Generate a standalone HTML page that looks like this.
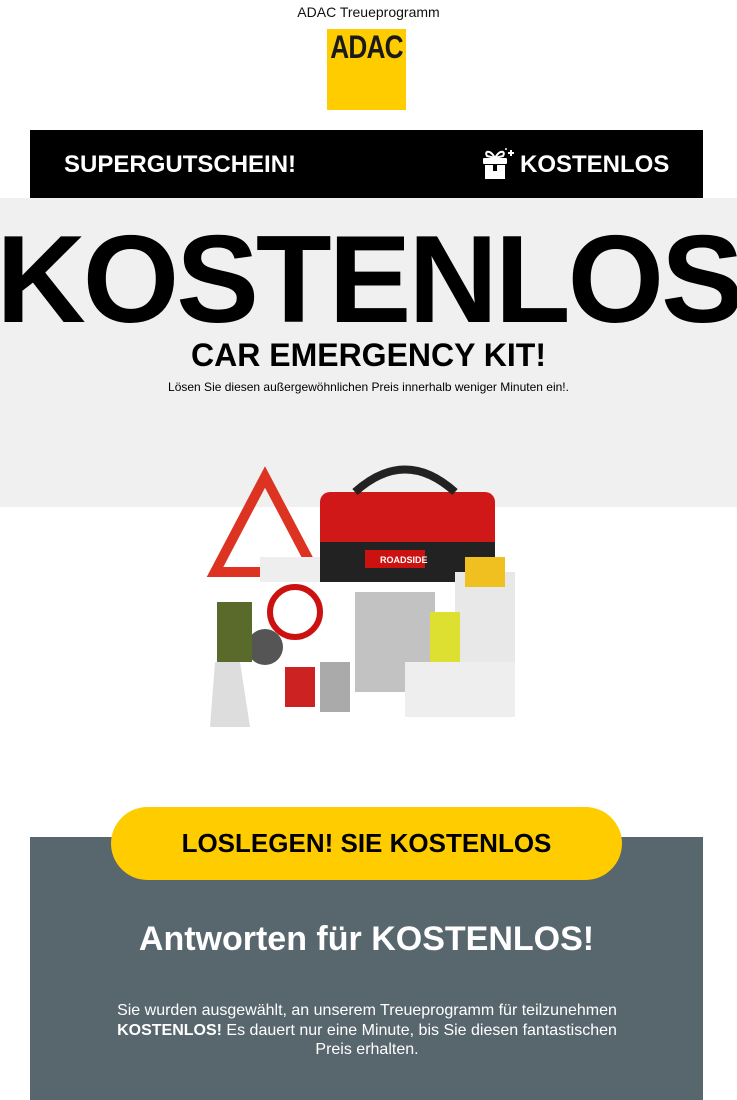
<!DOCTYPE html>
<html><head><meta charset="utf-8"><style>
*{margin:0;padding:0;box-sizing:border-box}
body{width:737px;height:1100px;overflow:hidden;background:#fff;font-family:"Liberation Sans",Arial,sans-serif;position:relative}
.abs{position:absolute}
</style></head><body>
<div class="abs" style="top:4px;left:0;width:737px;text-align:center;font-size:14px;color:#111">ADAC Treueprogramm</div>
<div class="abs" style="left:327px;top:29px;width:79px;height:81px;background:#ffcc00;overflow:hidden">
  <div style="text-align:center;font-weight:bold;font-size:32px;letter-spacing:-1px;color:#1a1a1a;margin-top:0px;transform:scaleX(0.82);margin-left:-10px;width:99px">ADAC</div>
</div>
<div class="abs" style="left:30px;top:130px;width:673px;height:68px;background:#000"></div>
<div class="abs" style="left:64px;top:151px;color:#fff;font-weight:bold;font-size:24px">SUPERGUTSCHEIN!</div>
<svg class="abs" style="left:480px;top:146px" width="36" height="34" viewBox="0 0 36 34">
<g fill="#fff"><rect x="3" y="12" width="24" height="6" rx="1"/><rect x="5" y="19" width="20" height="14"/>
<path d="M15 12 C10 3 4 5 7 10 Z M15 12 C20 3 26 5 23 10 Z" stroke="#fff" stroke-width="2" fill="none"/>
<rect x="30" y="4" width="2" height="6"/><rect x="28" y="6" width="6" height="2"/><circle cx="26" cy="3" r="1"/></g>
<rect x="13" y="19" width="4" height="6" fill="#000"/></svg>
<div class="abs" style="left:520px;top:151px;color:#fff;font-weight:bold;font-size:24px">KOSTENLOS</div>
<div class="abs" style="left:0;top:198px;width:737px;height:309px;background:#f0f0f0"></div>
<div class="abs" style="left:-30px;top:218px;width:797px;text-align:center;font-weight:bold;font-size:124px;letter-spacing:-3px;color:#000;line-height:124px;white-space:nowrap">KOSTENLOS</div>
<div class="abs" style="left:0;top:337px;width:737px;text-align:center;font-weight:bold;font-size:32px;color:#000">CAR EMERGENCY KIT!</div>
<div class="abs" style="left:0;top:380px;width:737px;text-align:center;font-size:12px;color:#000">Lösen Sie diesen außergewöhnlichen Preis innerhalb weniger Minuten ein!.</div>
<svg class="abs" style="left:205px;top:462px" width="325" height="270" viewBox="0 0 325 270">
<path d="M60 15 L110 110 L10 110 Z" fill="none" stroke="#d32" stroke-width="10"/>
<rect x="115" y="30" width="175" height="90" rx="10" fill="#d01818"/>
<rect x="115" y="80" width="175" height="40" fill="#222"/>
<path d="M150 30 Q200 -15 250 30" fill="none" stroke="#222" stroke-width="8"/>
<rect x="160" y="88" width="60" height="18" fill="#c11"/>
<text x="175" y="101" font-size="9" fill="#fff" font-family="Liberation Sans" font-weight="bold">ROADSIDE</text>
<rect x="55" y="95" width="60" height="25" fill="#eee"/>
<circle cx="90" cy="150" r="25" fill="none" stroke="#c11" stroke-width="6"/>
<circle cx="60" cy="185" r="18" fill="#555"/>
<rect x="12" y="140" width="35" height="60" fill="#5a6a2a"/>
<path d="M10 200 L35 200 L45 265 L5 265 Z" fill="#ddd"/>
<rect x="250" y="110" width="60" height="90" fill="#e8e8e8"/>
<rect x="260" y="95" width="40" height="30" fill="#f0c020"/>
<rect x="150" y="130" width="80" height="100" fill="#999" opacity="0.6"/>
<rect x="225" y="150" width="30" height="60" fill="#dde030"/>
<rect x="200" y="200" width="110" height="55" fill="#eee"/>
<rect x="80" y="205" width="30" height="40" fill="#c22"/>
<rect x="115" y="200" width="30" height="50" fill="#aaa"/>
</svg>
<div class="abs" style="left:30px;top:837px;width:673px;height:263px;background:#58666e"></div>
<div class="abs" style="left:111px;top:807px;width:511px;height:73px;background:#ffcc00;border-radius:37px;text-align:center;line-height:73px;font-weight:bold;font-size:26px;color:#000">LOSLEGEN! SIE KOSTENLOS</div>
<div class="abs" style="left:30px;top:920px;width:673px;text-align:center;color:#fff;font-weight:bold;font-size:34px">Antworten für KOSTENLOS!</div>
<div class="abs" style="left:115px;top:1001px;width:504px;text-align:center;color:#fff;font-size:16px;line-height:19.5px">Sie wurden ausgewählt, an unserem Treueprogramm für teilzunehmen <b>KOSTENLOS!</b> Es dauert nur eine Minute, bis Sie diesen fantastischen Preis erhalten.</div>
</body></html>
